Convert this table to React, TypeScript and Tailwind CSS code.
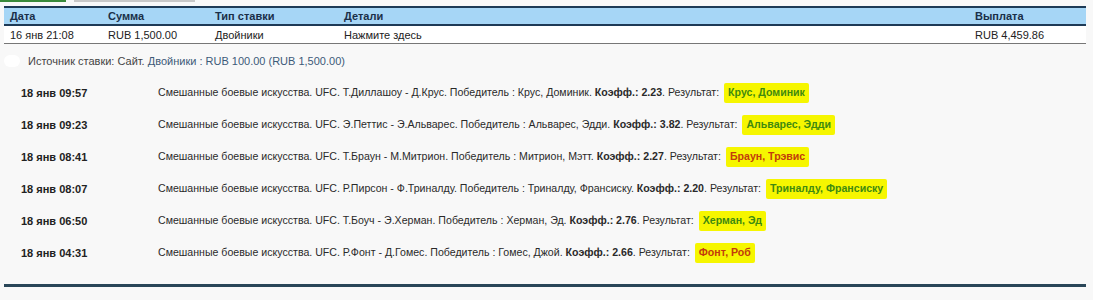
import React from 'react';

const legs = [
  { time: '18 янв 09:57', match: 'Т.Диллашоу - Д.Крус', pick: 'Крус, Доминик', odds: '2.23', result: 'Крус, Доминик', won: true },
  { time: '18 янв 09:23', match: 'Э.Петтис - Э.Альварес', pick: 'Альварес, Эдди', odds: '3.82', result: 'Альварес, Эдди', won: true },
  { time: '18 янв 08:41', match: 'Т.Браун - М.Митрион', pick: 'Митрион, Мэтт', odds: '2.27', result: 'Браун, Трэвис', won: false },
  { time: '18 янв 08:07', match: 'Р.Пирсон - Ф.Триналду', pick: 'Триналду, Франсиску', odds: '2.20', result: 'Триналду, Франсиску', won: true },
  { time: '18 янв 06:50', match: 'Т.Боуч - Э.Херман', pick: 'Херман, Эд', odds: '2.76', result: 'Херман, Эд', won: true },
  { time: '18 янв 04:31', match: 'Р.Фонт - Д.Гомес', pick: 'Гомес, Джой', odds: '2.66', result: 'Фонт, Роб', won: false },
];

export default function App() {
  return (
    <div className="h-[300px] w-[1093px] overflow-hidden bg-[#f8f8f8] text-[11px] text-[#222] [font-family:'Liberation_Sans',Arial,sans-serif]">
      {/* tabs */}
      <div className="flex h-[2px] gap-2">
        <div className="w-[66px] bg-[#3a8a3a]" />
        <div className="w-[121px] bg-[#c8c8c8]" />
      </div>

      <div className="mx-[4px] mt-[4px] w-[1082px]">
        {/* header */}
        <div className="grid h-[20px] grid-cols-[100px_107px_129px_631px_1fr] items-center border-t-2 border-b-2 border-[#1d3a56] bg-[#a6d6f6] font-bold text-[#1a2f48]">
          <div className="pl-[6px]">Дата</div>
          <div className="pl-[4px]">Сумма</div>
          <div className="pl-[4px]">Тип ставки</div>
          <div className="pl-[4px]">Детали</div>
          <div className="pl-[4px]">Выплата</div>
        </div>
        <div className="grid h-[18px] grid-cols-[100px_107px_129px_631px_1fr] items-center border-b border-[#777] bg-white pt-[1px]">
          <div className="pl-[6px]">16 янв 21:08</div>
          <div className="pl-[4px]">RUB 1,500.00</div>
          <div className="pl-[4px]">Двойники</div>
          <div className="pl-[4px]">Нажмите здесь</div>
          <div className="pl-[4px]">RUB 4,459.86</div>
        </div>

        {/* source */}
        <div className="mt-[9px] flex h-[16px] items-center gap-[8px] text-[#444]">
          <div className="h-[12px] w-[16px] rounded-full bg-white" />
          <div>
            Источник ставки: Сайт. <span className="text-[#3d5a78]">Двойники : RUB 100.00 (RUB 1,500.00)</span>
          </div>
        </div>

        {/* legs */}
        <div className="mt-[15px] flex flex-col gap-[14px]">
          {legs.map((l) => (
            <div key={l.time} className="flex h-[18px] items-center">
              <div className="w-[154px] pl-[17px] font-bold">{l.time}</div>
              <div className="flex items-center text-[10.6px] text-[#2a2a2a]">
                <span>
                  Смешанные боевые искусства. UFC. {l.match}. Победитель : {l.pick}. <b>Коэфф.: {l.odds}</b>. Результат:
                </span>
                <span
                  className={
                    'ml-[5px] rounded-[2px] bg-[#f6f600] px-[4px] py-[2px] font-bold ' +
                    (l.won ? 'text-[#3f8a10]' : 'text-[#c23c0c]')
                  }
                >
                  {l.result}
                </span>
              </div>
            </div>
          ))}
        </div>

        <div className="mt-[22px] h-[3px] bg-[#2a4658]" />
      </div>
    </div>
  );
}
